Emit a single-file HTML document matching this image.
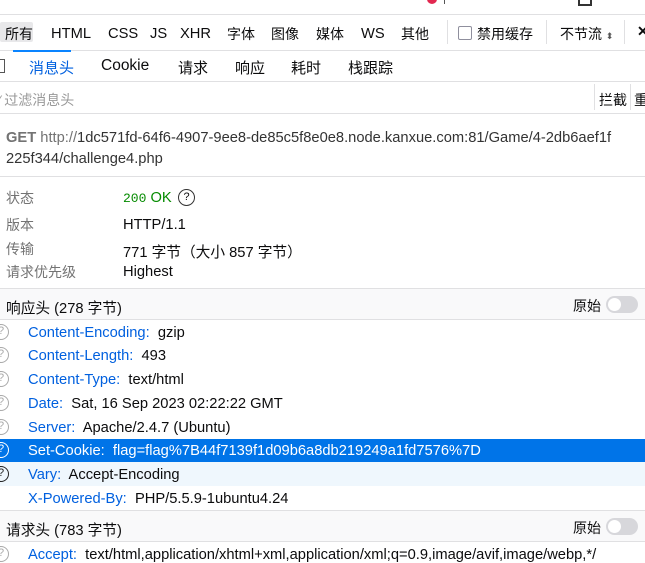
<!DOCTYPE html>
<html><head><meta charset="utf-8"><style>
*{margin:0;padding:0;box-sizing:border-box}
body{width:645px;height:563px;overflow:hidden;background:#fff;font-family:"Liberation Sans","Noto Sans CJK SC",sans-serif;font-size:14px;color:#0c0c0d;position:relative}
.a{position:absolute;white-space:nowrap}
.r{font-size:14.7px;margin-top:2px}
.line{position:absolute;left:0;width:645px;height:1px;background:#e0e0e2}
.k{color:#0060df}
.q{position:absolute;left:-7px;width:16px;height:16px;border:1.5px solid #aaa;border-radius:50%;font-size:11px;line-height:13px;text-align:center;color:#aaa}
.tog{position:absolute;left:606px;width:32px;height:17px;border-radius:9px;background:#d7d7db}
.tog:after{content:"";position:absolute;left:2px;top:2px;width:13px;height:13px;border-radius:50%;background:#fff}
.g{color:#737373}
</style></head><body>
<div class="a" style="left:427px;top:-6px;width:10px;height:10px;border-radius:50%;background:#e22850"></div>
<div class="a" style="left:444px;top:-2px;width:1px;height:6px;background:#555"></div>
<div class="a" style="left:578px;top:-4px;width:14px;height:10px;border:2px solid #333"></div>
<div class="line" style="top:14px"></div>
<div class="a" style="left:0;top:22px;width:33px;height:20px;background:#e8e8ea;border-radius:2px"></div>
<div class="a" style="left:5px;top:24px">所有</div>
<div class="a r" style="left:51px;top:24px">HTML</div>
<div class="a r" style="left:108px;top:24px">CSS</div>
<div class="a r" style="left:150px;top:24px">JS</div>
<div class="a r" style="left:180px;top:24px">XHR</div>
<div class="a" style="left:227px;top:24px">字体</div>
<div class="a" style="left:271px;top:24px">图像</div>
<div class="a" style="left:316px;top:24px">媒体</div>
<div class="a r" style="left:361px;top:24px">WS</div>
<div class="a" style="left:401px;top:24px">其他</div>
<div class="a" style="left:447px;top:20px;width:1px;height:24px;background:#e0e0e2"></div>
<div class="a" style="left:458px;top:26px;width:14px;height:14px;border:1.5px solid #8f8f9d;border-radius:2px"></div>
<div class="a" style="left:477px;top:24px">禁用缓存</div>
<div class="a" style="left:546px;top:20px;width:1px;height:24px;background:#e0e0e2"></div>
<div class="a" style="left:560px;top:24px">不节流 <span style="font-size:9px;color:#555">⬍</span></div>
<div class="a" style="left:624px;top:20px;width:1px;height:24px;background:#e0e0e2"></div>
<div class="a" style="left:637px;top:23px;font-weight:bold">✕</div>
<div class="line" style="top:50px"></div>
<div class="a" style="left:0;top:59px;width:5px;height:14px;border:1.5px solid #555;border-left:none"></div>
<div class="a" style="left:13px;top:50px;width:58px;height:2px;background:#0a84ff"></div>
<div class="a k" style="left:29px;top:57px;font-size:15px">消息头</div>
<div class="a" style="left:101px;top:57px;font-size:15.5px">Cookie</div>
<div class="a" style="left:178px;top:57px;font-size:15px">请求</div>
<div class="a" style="left:235px;top:57px;font-size:15px">响应</div>
<div class="a" style="left:291px;top:57px;font-size:15px">耗时</div>
<div class="a" style="left:348px;top:57px;font-size:15px">栈跟踪</div>
<div class="line" style="top:81px"></div>
<div class="a g" style="left:-2px;top:90px;color:#999">⁄ 过滤消息头</div>
<div class="a" style="left:594px;top:84px;width:1px;height:26px;background:#e0e0e2"></div>
<div class="a" style="left:599px;top:90px">拦截</div>
<div class="a" style="left:630px;top:84px;width:1px;height:26px;background:#e0e0e2"></div>
<div class="a" style="left:634px;top:90px">重</div>
<div class="line" style="top:113px"></div>
<div class="a r" style="left:6px;top:126px;line-height:21px;color:#333"><b class="g">GET</b> <span class="g">http://</span>1dc571fd-64f6-4907-9ee8-de85c5f8e0e8.node.kanxue.com:81/Game/4-2db6aef1f<br>225f344/challenge4.php</div>
<div class="line" style="top:176px"></div>
<div class="a g" style="left:6px;top:188px">状态</div>
<div class="a r" style="left:123px;top:188px;color:#058b00"><span style="font-family:'Liberation Mono',monospace;font-size:13px">200</span> OK</div>
<div class="a" style="left:178px;top:189px;width:17px;height:17px;border:1.5px solid #333;border-radius:50%;font-size:11px;text-align:center;line-height:14px">?</div>
<div class="a g" style="left:6px;top:215px">版本</div>
<div class="a r" style="left:123px;top:215px">HTTP/1.1</div>
<div class="a g" style="left:6px;top:239px">传输</div>
<div class="a r" style="left:123px;top:239px">771 字节（大小 857 字节）</div>
<div class="a g" style="left:6px;top:262px">请求优先级</div>
<div class="a r" style="left:123px;top:262px">Highest</div>
<div class="a" style="left:0;top:288px;width:645px;height:32px;background:#f9f9fa;border-top:1px solid #e0e0e2;border-bottom:1px solid #e0e0e2"></div>
<div class="a r" style="left:6px;top:295px">响应头 (278 字节)</div>
<div class="a" style="left:573px;top:296px">原始</div>
<div class="tog" style="top:296px"></div>
<div class="a" style="left:0;top:439px;width:645px;height:23px;background:#0074e8"></div>
<div class="a" style="left:0;top:462px;width:645px;height:24px;background:#eff7fd"></div>
<div class="q" style="top:324px">?</div><div class="a r" style="left:28px;top:323px"><span class="k">Content-Encoding:</span>&nbsp; gzip</div>
<div class="q" style="top:347px">?</div><div class="a r" style="left:28px;top:346px"><span class="k">Content-Length:</span>&nbsp; 493</div>
<div class="q" style="top:371px">?</div><div class="a r" style="left:28px;top:370px"><span class="k">Content-Type:</span>&nbsp; text/html</div>
<div class="q" style="top:395px">?</div><div class="a r" style="left:28px;top:394px"><span class="k">Date:</span>&nbsp; Sat, 16 Sep 2023 02:22:22 GMT</div>
<div class="q" style="top:419px">?</div><div class="a r" style="left:28px;top:418px"><span class="k">Server:</span>&nbsp; Apache/2.4.7 (Ubuntu)</div>
<div class="q" style="top:442px;border-color:#fff;color:#fff">?</div><div class="a r" style="left:28px;top:441px;color:#fff">Set-Cookie:&nbsp; flag=flag%7B44f7139f1d09b6a8db219249a1fd7576%7D</div>
<div class="q" style="top:466px;border-color:#222;color:#222">?</div><div class="a r" style="left:28px;top:465px"><span class="k">Vary:</span>&nbsp; Accept-Encoding</div>
<div class="a r" style="left:28px;top:489px"><span class="k">X-Powered-By:</span>&nbsp; PHP/5.5.9-1ubuntu4.24</div>
<div class="a" style="left:0;top:510px;width:645px;height:32px;background:#f9f9fa;border-top:1px solid #e0e0e2;border-bottom:1px solid #e0e0e2"></div>
<div class="a r" style="left:6px;top:517px">请求头 (783 字节)</div>
<div class="a" style="left:573px;top:518px">原始</div>
<div class="tog" style="top:518px"></div>
<div class="q" style="top:546px">?</div><div class="a r" style="left:28px;top:545px"><span class="k">Accept:</span>&nbsp; text/html,application/xhtml+xml,application/xml;q=0.9,image/avif,image/webp,*/</div>
</body></html>
